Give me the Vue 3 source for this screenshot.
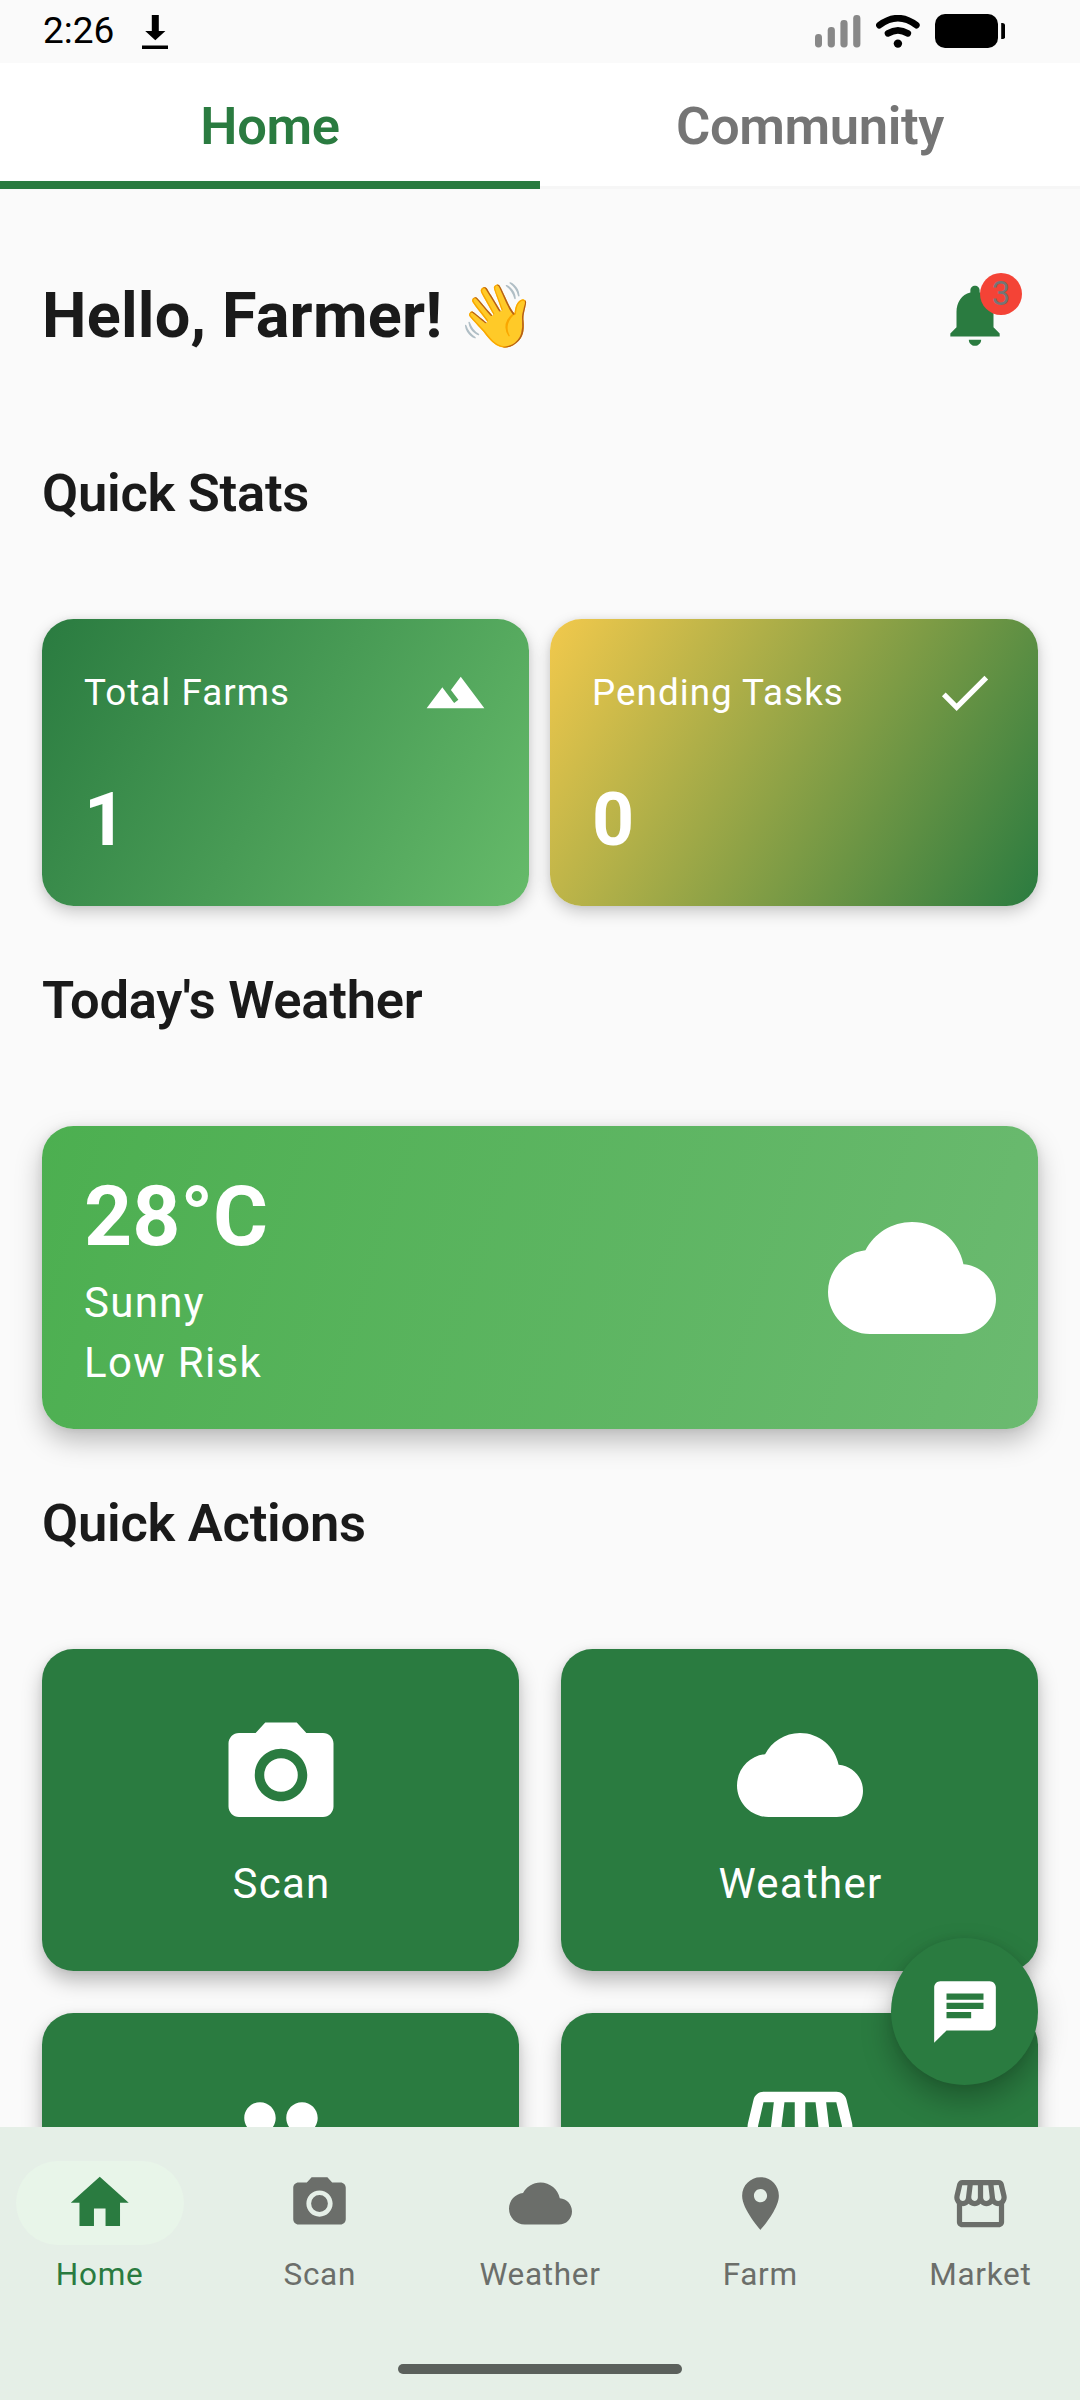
<script setup>
import { ref } from 'vue';

// 24x24 아이콘 path
const icons = {
    terrain: 'M14 6l-3.75 5 2.85 3.8-1.6 1.2C9.81 13.75 7 10 7 10l-6 8h22L14 6z',
    check: 'M9 16.17L4.83 12l-1.42 1.41L9 19 21 7l-1.41-1.41z',
    bell: 'M12 22c1.1 0 2-.9 2-2h-4c0 1.1.89 2 2 2zm6-6v-5c0-3.07-1.64-5.64-4.5-6.32V4c0-.83-.67-1.5-1.5-1.5s-1.5.67-1.5 1.5v.68C7.63 5.36 6 7.92 6 11v5l-2 2v1h16v-1l-2-2z',
    cloud: 'M19.35 10.04C18.67 6.59 15.64 4 12 4 9.11 4 6.6 5.64 5.35 8.04 2.34 8.36 0 10.91 0 14c0 3.31 2.69 6 6 6h13c2.76 0 5-2.24 5-5 0-2.64-2.05-4.78-4.65-4.96z',
    camera: 'M12 8.8a3.2 3.2 0 1 0 0 6.4 3.2 3.2 0 0 0 0-6.4zM9 2L7.17 4H4c-1.1 0-2 .9-2 2v12c0 1.1.9 2 2 2h16c1.1 0 2-.9 2-2V6c0-1.1-.9-2-2-2h-3.17L15 2H9zm3 15c-2.76 0-5-2.24-5-5s2.24-5 5-5 5 2.24 5 5-2.24 5-5 5z',
    group: 'M16 11c1.66 0 2.99-1.34 2.99-3S17.66 5 16 5c-1.66 0-3 1.34-3 3s1.34 3 3 3zm-8 0c1.66 0 2.99-1.34 2.99-3S9.66 5 8 5C6.34 5 5 6.34 5 8s1.34 3 3 3zm0 2c-2.33 0-7 1.17-7 3.5V19h14v-2.5c0-2.33-4.67-3.5-7-3.5zm8 0c-.29 0-.62.02-.97.05 1.16.84 1.97 1.97 1.97 3.45V19h6v-2.5c0-2.33-4.67-3.5-7-3.5z',
    store: 'M21.9 8.89l-1.05-4.37c-.22-.9-1-1.52-1.91-1.52H5.05c-.9 0-1.69.63-1.9 1.52L2.1 8.89c-.24 1.02-.02 2.06.62 2.88.08.11.19.19.28.29V19c0 1.1.9 2 2 2h14c1.1 0 2-.9 2-2v-6.94c.09-.09.2-.18.28-.28.64-.82.87-1.87.62-2.89zm-2.99-3.9l1.05 4.37c.1.42.01.84-.25 1.17-.14.18-.44.47-.94.47-.61 0-1.14-.49-1.21-1.14L16.98 5l1.93-.01zM13 5h1.96l.54 4.52c.05.39-.07.78-.33 1.07-.22.26-.54.41-.95.41-.67 0-1.22-.59-1.22-1.31V5zM8.49 9.52L9.04 5H11v4.69c0 .72-.55 1.31-1.29 1.31-.34 0-.65-.15-.89-.41-.25-.29-.37-.68-.33-1.07zm-4.45-.16L5.05 5h1.97l-.58 4.86c-.08.65-.6 1.14-1.21 1.14-.49 0-.8-.29-.93-.47-.27-.32-.36-.75-.26-1.17zM5 19v-6.03c.08.01.15.03.23.03.87 0 1.66-.36 2.24-.95.6.6 1.4.95 2.31.95.87 0 1.65-.36 2.23-.93.59.57 1.39.93 2.29.93.84 0 1.64-.35 2.24-.95.58.59 1.37.95 2.24.95.08 0 .15-.02.23-.03V19H5z',
    chat: 'M20 2H4c-1.1 0-1.99.9-1.99 2L2 22l4-4h14c1.1 0 2-.9 2-2V4c0-1.1-.9-2-2-2zM6 9h12v2H6V9zm8 5H6v-2h8v2zm4-6H6V6h12v2z',
    home: 'M10 20v-6h4v6h5v-8h3L12 3 2 12h3v8z',
    place: 'M12 2C8.13 2 5 5.13 5 9c0 5.25 7 13 7 13s7-7.75 7-13c0-3.87-3.13-7-7-7zm0 9.5c-1.38 0-2.5-1.12-2.5-2.5s1.12-2.5 2.5-2.5 2.5 1.12 2.5 2.5-1.12 2.5-2.5 2.5z'
};

const tabs = ['Home', 'Community'];
const activeTab = ref('Home');

const stats = [
    { label: 'Total Farms', value: 1, icon: 'terrain', type: 'farms' },
    { label: 'Pending Tasks', value: 0, icon: 'check', type: 'tasks' }
];

const actions = [
    { icon: 'camera', label: 'Scan' },
    { icon: 'cloud', label: 'Weather' },
    { icon: 'group' },
    { icon: 'store' }
];

const navItems = [
    { label: 'Home', icon: 'home' },
    { label: 'Scan', icon: 'camera' },
    { label: 'Weather', icon: 'cloud' },
    { label: 'Farm', icon: 'place' },
    { label: 'Market', icon: 'store' }
];
const activeNav = ref('Home');
</script>

<template>
    <div class="screen">
        <div class="status-bar">
            <div class="status-left">
                <span class="time">2:26</span>
                <svg class="download" viewBox="0 0 26 34">
                    <path d="M9.8 0h7v16h6.6L13.3 25.2 3.2 16h6.6zM0 30.5h26V34H0z" />
                </svg>
            </div>
            <div class="status-right">
                <svg class="signal" viewBox="0 0 46 34">
                    <rect x="0" y="19" width="7" height="13.5" rx="3.4" />
                    <rect x="12.7" y="12" width="7.2" height="20.5" rx="3.4" />
                    <rect x="25.4" y="5" width="7.2" height="27.5" rx="3.4" />
                    <rect x="38.2" y="0" width="7.2" height="32.5" rx="3.4" />
                </svg>
                <svg class="wifi" viewBox="0 0 44 34">
                    <path d="M3.4 10.2Q22 -3.8 40.4 10.2" />
                    <path d="M12 18.4Q22 12.2 31.8 18.4" />
                    <circle cx="21.9" cy="28.6" r="4.2" />
                </svg>
                <svg class="battery" viewBox="0 0 70 34">
                    <rect x="0" y="0" width="63" height="34" rx="10" />
                    <path d="M66.2 9h1.3q2.7 0 2.7 3v10q0 3-2.7 3h-1.3z" />
                </svg>
            </div>
        </div>

        <div class="tabs">
            <div v-for="tab in tabs" :key="tab" class="tab" :class="{ active: tab === activeTab }" @click="activeTab = tab">
                {{ tab }}
            </div>
        </div>

        <div class="body">
            <div class="content">
                <div class="header">
                    <h1 class="greeting">Hello, Farmer! <span class="wave">👋</span></h1>
                    <div class="btn-bell">
                        <svg viewBox="0 0 24 24"><path :d="icons.bell" /></svg>
                        <span class="badge">3</span>
                    </div>
                </div>

                <h2 class="section-title">Quick Stats</h2>
                <div class="stats">
                    <div v-for="stat in stats" :key="stat.label" class="stat-card" :class="stat.type">
                        <div class="stat-top">
                            <span>{{ stat.label }}</span>
                            <svg viewBox="0 0 24 24"><path :d="icons[stat.icon]" /></svg>
                        </div>
                        <div class="stat-value">{{ stat.value }}</div>
                    </div>
                </div>

                <h2 class="section-title">Today's Weather</h2>
                <div class="weather-card">
                    <div class="weather-info">
                        <div class="temp">28°C</div>
                        <div>Sunny</div>
                        <div>Low Risk</div>
                    </div>
                    <svg viewBox="0 0 24 24"><path :d="icons.cloud" /></svg>
                </div>

                <h2 class="section-title">Quick Actions</h2>
                <div class="actions">
                    <div v-for="action in actions" :key="action.icon" class="action-card">
                        <svg viewBox="0 0 24 24"><path fill-rule="evenodd" :d="icons[action.icon]" /></svg>
                        <span v-if="action.label">{{ action.label }}</span>
                    </div>
                </div>
            </div>

            <div class="fab">
                <svg viewBox="0 0 24 24"><path :d="icons.chat" /></svg>
            </div>
        </div>

        <div class="bottom-nav">
            <div class="nav-items">
                <div v-for="item in navItems" :key="item.label" class="nav-item" :class="{ active: item.label === activeNav }" @click="activeNav = item.label">
                    <div class="nav-icon">
                        <svg viewBox="0 0 24 24"><path fill-rule="evenodd" :d="icons[item.icon]" /></svg>
                    </div>
                    <span>{{ item.label }}</span>
                </div>
            </div>
            <div class="gesture-bar"></div>
        </div>
    </div>
</template>

<style>
body {
    margin: 0;
    background-color: #FAFAFA;
}
</style>

<style scoped>
.screen {
    width: 1080px;
    height: 2400px;
    display: flex;
    flex-direction: column;
    overflow: hidden;
    background-color: #FAFAFA;
    font-family: Roboto, "Noto Sans", sans-serif;
    color: #1A1A1A;
}

svg {
    display: block;
    flex-shrink: 0;
    fill: currentColor;
}

/* 상태바 */
.status-bar {
    height: 63px;
    box-sizing: border-box;
    padding: 0 75px 0 43px;
    display: flex;
    justify-content: space-between;
    color: #000;
}

.status-left,
.status-right {
    display: flex;
    align-items: flex-start;
}

.time {
    font-size: 37px;
    line-height: 61px;
}

.download {
    width: 26px;
    height: 34px;
    margin: 15px 0 0 28px;
}

.signal {
    width: 46px;
    height: 34px;
    margin-top: 15px;
    color: #888;
}

.wifi {
    width: 44px;
    height: 34px;
    margin: 15px 0 0 15px;
}

.wifi path {
    fill: none;
    stroke: currentColor;
    stroke-width: 6.6;
    stroke-linecap: round;
}

.battery {
    width: 70px;
    height: 34px;
    margin: 14px 0 0 15px;
}

/* 탭 */
.tabs {
    height: 126px;
    display: flex;
    background-color: #fff;
    flex-shrink: 0;
}

.tab {
    flex: 1;
    box-sizing: border-box;
    border-bottom: 3px solid #F6F6F6;
    text-align: center;
    font-size: 52.5px;
    font-weight: 600;
    line-height: 126px;
    letter-spacing: -0.35px;
    color: #757575;
}

.tab.active {
    color: #2A7B40;
    border-bottom: 8px solid #2A7B40;
}

/* 본문 */
.body {
    flex: 1;
    min-height: 0;
    position: relative;
    overflow: hidden;
}

.content {
    padding: 63px 42px 0;
}

.header {
    height: 126px;
    display: flex;
    align-items: center;
    justify-content: space-between;
    margin-bottom: 84px;
}

.greeting {
    margin: 0;
    padding-top: 2px;
    font-size: 63px;
    font-weight: 700;
    line-height: 74px;
    letter-spacing: 0.2px;
}

.btn-bell {
    width: 126px;
    height: 126px;
    display: flex;
    align-items: center;
    justify-content: center;
    position: relative;
    color: #2A7B40;
}

.btn-bell svg {
    width: 74px;
    height: 74px;
}

.badge {
    position: absolute;
    top: 21px;
    right: 16px;
    width: 42px;
    height: 42px;
    border-radius: 50%;
    background-color: #F44336;
    color: #757575;
    font-size: 33px;
    line-height: 42px;
    text-align: center;
}

.section-title {
    margin: 0 0 95px;
    font-size: 52.5px;
    font-weight: 600;
    line-height: 62px;
    letter-spacing: -0.25px;
}

.stats {
    display: grid;
    grid-template-columns: 487px 488px;
    gap: 21px;
    margin-bottom: 63px;
}

.stat-card {
    height: 287px;
    box-sizing: border-box;
    padding: 42px;
    border-radius: 31.5px;
    display: flex;
    flex-direction: column;
    justify-content: space-between;
    color: #fff;
    box-shadow: 0 6px 16px rgba(0, 0, 0, 0.2), 0 0 6px rgba(0, 0, 0, 0.06);
}

.stat-card.farms {
    background: linear-gradient(120.5deg, #2A7B40, #66BB6A);
}

.stat-card.tasks {
    background: linear-gradient(120.5deg, #F2C94C, #2A7B40);
}

.stat-top {
    display: flex;
    align-items: center;
    justify-content: space-between;
    font-size: 36.75px;
    letter-spacing: 1.05px;
}

.stat-top svg {
    width: 63px;
    height: 63px;
}

.stat-value {
    margin-bottom: 1px;
    font-size: 73.5px;
    font-weight: 700;
    line-height: 86px;
}

.weather-card {
    height: 303px;
    box-sizing: border-box;
    padding: 42px;
    margin-bottom: 63px;
    border-radius: 31.5px;
    display: flex;
    align-items: center;
    justify-content: space-between;
    color: #fff;
    background: linear-gradient(106.9deg, #4CAF50, #6BBA70);
    box-shadow: 0 12px 27px rgba(0, 0, 0, 0.25), 0 0 8px rgba(0, 0, 0, 0.08);
}

.weather-info {
    display: flex;
    flex-direction: column;
    gap: 11px;
    font-size: 42px;
    line-height: 49.2px;
    letter-spacing: 1.3px;
}

.temp {
    font-size: 84px;
    font-weight: 700;
    line-height: 98.4px;
    letter-spacing: 0;
}

.weather-card svg {
    width: 168px;
    height: 168px;
}

.actions {
    display: grid;
    grid-template-columns: 1fr 1fr;
    gap: 42px;
}

.action-card {
    height: 322px;
    box-sizing: border-box;
    padding-top: 63px;
    display: flex;
    flex-direction: column;
    align-items: center;
    gap: 21px;
    border-radius: 31.5px;
    background-color: #2A7B40;
    color: #fff;
    font-size: 42px;
    line-height: 49.2px;
    letter-spacing: 1.3px;
    box-shadow: 0 10px 20px rgba(0, 0, 0, 0.26), 0 0 6px rgba(0, 0, 0, 0.06);
}

.action-card svg {
    width: 126px;
    height: 126px;
}

.action-card span {
    padding-left: 2px;
}

.fab {
    position: absolute;
    right: 42px;
    bottom: 42px;
    width: 147px;
    height: 147px;
    border-radius: 50%;
    display: flex;
    align-items: center;
    justify-content: center;
    background-color: #2A7B40;
    color: #fff;
    box-shadow: 0 15px 30px rgba(0, 0, 0, 0.28), 0 0 8px rgba(0, 0, 0, 0.08);
}

.fab svg {
    width: 74px;
    height: 74px;
}

/* 하단 네비게이션 */
.bottom-nav {
    height: 273px;
    flex-shrink: 0;
    box-sizing: border-box;
    padding: 34px 0 26px;
    display: flex;
    flex-direction: column;
    align-items: center;
    justify-content: space-between;
    background-color: #E5EFE7;
}

.nav-items {
    width: 100%;
    display: flex;
    gap: 21px;
}

.nav-item {
    flex: 1;
    display: flex;
    flex-direction: column;
    align-items: center;
    gap: 9px;
    color: #6B6E6A;
    font-size: 31.5px;
    line-height: 42px;
    letter-spacing: 0.7px;
}

.nav-item.active {
    color: #2A7B40;
}

.nav-icon {
    width: 168px;
    height: 84px;
    border-radius: 42px;
    display: flex;
    align-items: center;
    justify-content: center;
}

.nav-icon svg {
    width: 63px;
    height: 63px;
}

.nav-item.active .nav-icon {
    background-color: #E8F5E9;
}

.nav-item.active .nav-icon svg {
    width: 69.5px;
    height: 69.5px;
}

.gesture-bar {
    width: 284px;
    height: 10px;
    border-radius: 5px;
    background-color: #5B605C;
}
</style>
